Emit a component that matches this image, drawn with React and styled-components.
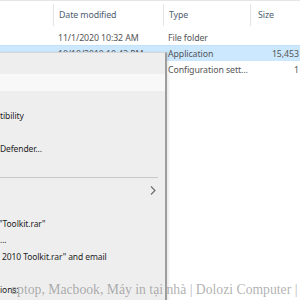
import React from "react"
import styled, { createGlobalStyle } from "styled-components"

const GlobalStyle = createGlobalStyle`
	html, body {
		margin: 0;
		padding: 0;
		background: #ffffff;
	}
	body {
		font-family: "Noto Sans", "Open Sans", sans-serif;
	}
`

const Window = styled.div`
	position: relative;
	width: 300px;
	height: 300px;
	overflow: hidden;
	background: #ffffff;
	border-top: 1px solid #e6e6e6;
	box-sizing: border-box;
`

const Grid = styled.div`
	display: grid;
	grid-template-columns: 53px 110px 87px 70px;
	width: 320px;
`

const HeaderRow = styled(Grid)`
	height: 28px;
	align-items: center;
`

const HeaderCell = styled.div`
	height: 22px;
	display: flex;
	align-items: center;
	padding-left: ${(p) => p.$pad || 5}px;
	border-left: ${(p) => (p.$first ? "none" : "1px solid #e5e5e5")};
	font-size: 8.8px;
	letter-spacing: -0.1px;
	color: #4d5d70;
	white-space: nowrap;
`

const FileRow = styled(Grid)`
	height: 16px;
	align-items: center;
	background: ${(p) => (p.$selected ? "#cce8ff" : "transparent")};
	border-top: 1px solid ${(p) => (p.$selected ? "#c3e1f9" : "transparent")};
	box-sizing: border-box;
`

const Cell = styled.div`
	padding-left: 5px;
	padding-right: ${(p) => (p.$right ? 8 : 0)}px;
	text-align: ${(p) => (p.$right ? "right" : "left")};
	font-size: 8.8px;
	letter-spacing: -0.1px;
	color: #555555;
	white-space: nowrap;
	overflow: hidden;
`

const Menu = styled.div`
	position: absolute;
	left: 0;
	top: 51px;
	width: 165px;
	bottom: -10px;
	background: #eeeeee;
	border-top: 1px solid #d6d6d6;
	border-right: 2px solid #9d9d9d;
	box-shadow: 2px 0 2px rgba(0, 0, 0, 0.08);
	padding-top: 1px;
`

const MenuItem = styled.div`
	height: ${(p) => p.$h || 16.5}px;
	display: flex;
	align-items: center;
	justify-content: space-between;
	padding-right: 9px;
	background: ${(p) => (p.$light ? "#f8f8f8" : "transparent")};
	font-size: 8.5px;
	letter-spacing: -0.1px;
	color: #1e1e1e;
	white-space: nowrap;
`

const MenuText = styled.span`
	margin-left: ${(p) => p.$offset || 0}px;
`

const Separator = styled.div`
	height: 1px;
	margin: 4px 7px 4px 0;
	background: #c8c8c8;
`

const Watermark = styled.div`
	position: absolute;
	left: 11px;
	top: 281px;
	font-family: "Liberation Serif", "DejaVu Serif", serif;
	font-size: 13.7px;
	color: rgba(110, 110, 110, 0.55);
	white-space: nowrap;
`

const Chevron = () => (
	<svg width="6" height="9" viewBox="0 0 6 9">
		<path d="M1 0.5 L5 4.5 L1 8.5" fill="none" stroke="#6a6a6a" strokeWidth="1.1" />
	</svg>
)

const files = [
	{ date: "11/1/2020 10:32 AM", type: "File folder", size: "" },
	{ date: "10/10/2010 10:43 PM", type: "Application", size: "15,453 KB", selected: true },
	{ date: "", type: "Configuration sett...", size: "1 KB" },
]

const App = () => {
	return (
		<>
			<GlobalStyle />
			<Window>
				<HeaderRow>
					<HeaderCell $first />
					<HeaderCell>Date modified</HeaderCell>
					<HeaderCell>Type</HeaderCell>
					<HeaderCell $pad={7}>Size</HeaderCell>
				</HeaderRow>
				{files.map((f, i) => (
					<FileRow key={i} $selected={f.selected}>
						<Cell />
						<Cell>{f.date}</Cell>
						<Cell>{f.type}</Cell>
						<Cell $right>{f.size}</Cell>
					</FileRow>
				))}

				<Menu>
					<MenuItem $h={20} />
					<MenuItem $light>
						<MenuText $offset={-2}>’</MenuText>
					</MenuItem>
					<MenuItem />
					<MenuItem>
						<MenuText>tibility</MenuText>
					</MenuItem>
					<MenuItem />
					<MenuItem>
						<MenuText>Defender...</MenuText>
					</MenuItem>
					<MenuItem />
					<Separator />
					<MenuItem>
						<span />
						<Chevron />
					</MenuItem>
					<MenuItem />
					<MenuItem>
						<MenuText $offset={-1}>"Toolkit.rar"</MenuText>
					</MenuItem>
					<MenuItem>
						<MenuText>...</MenuText>
					</MenuItem>
					<MenuItem>
						<MenuText $offset={2}>2010 Toolkit.rar" and email</MenuText>
					</MenuItem>
					<MenuItem />
					<MenuItem>
						<MenuText>ions:</MenuText>
					</MenuItem>
				</Menu>

				<Watermark>aptop, Macbook, Máy in tại nhà | Dolozi Computer |</Watermark>
			</Window>
		</>
	)
}

export default App
